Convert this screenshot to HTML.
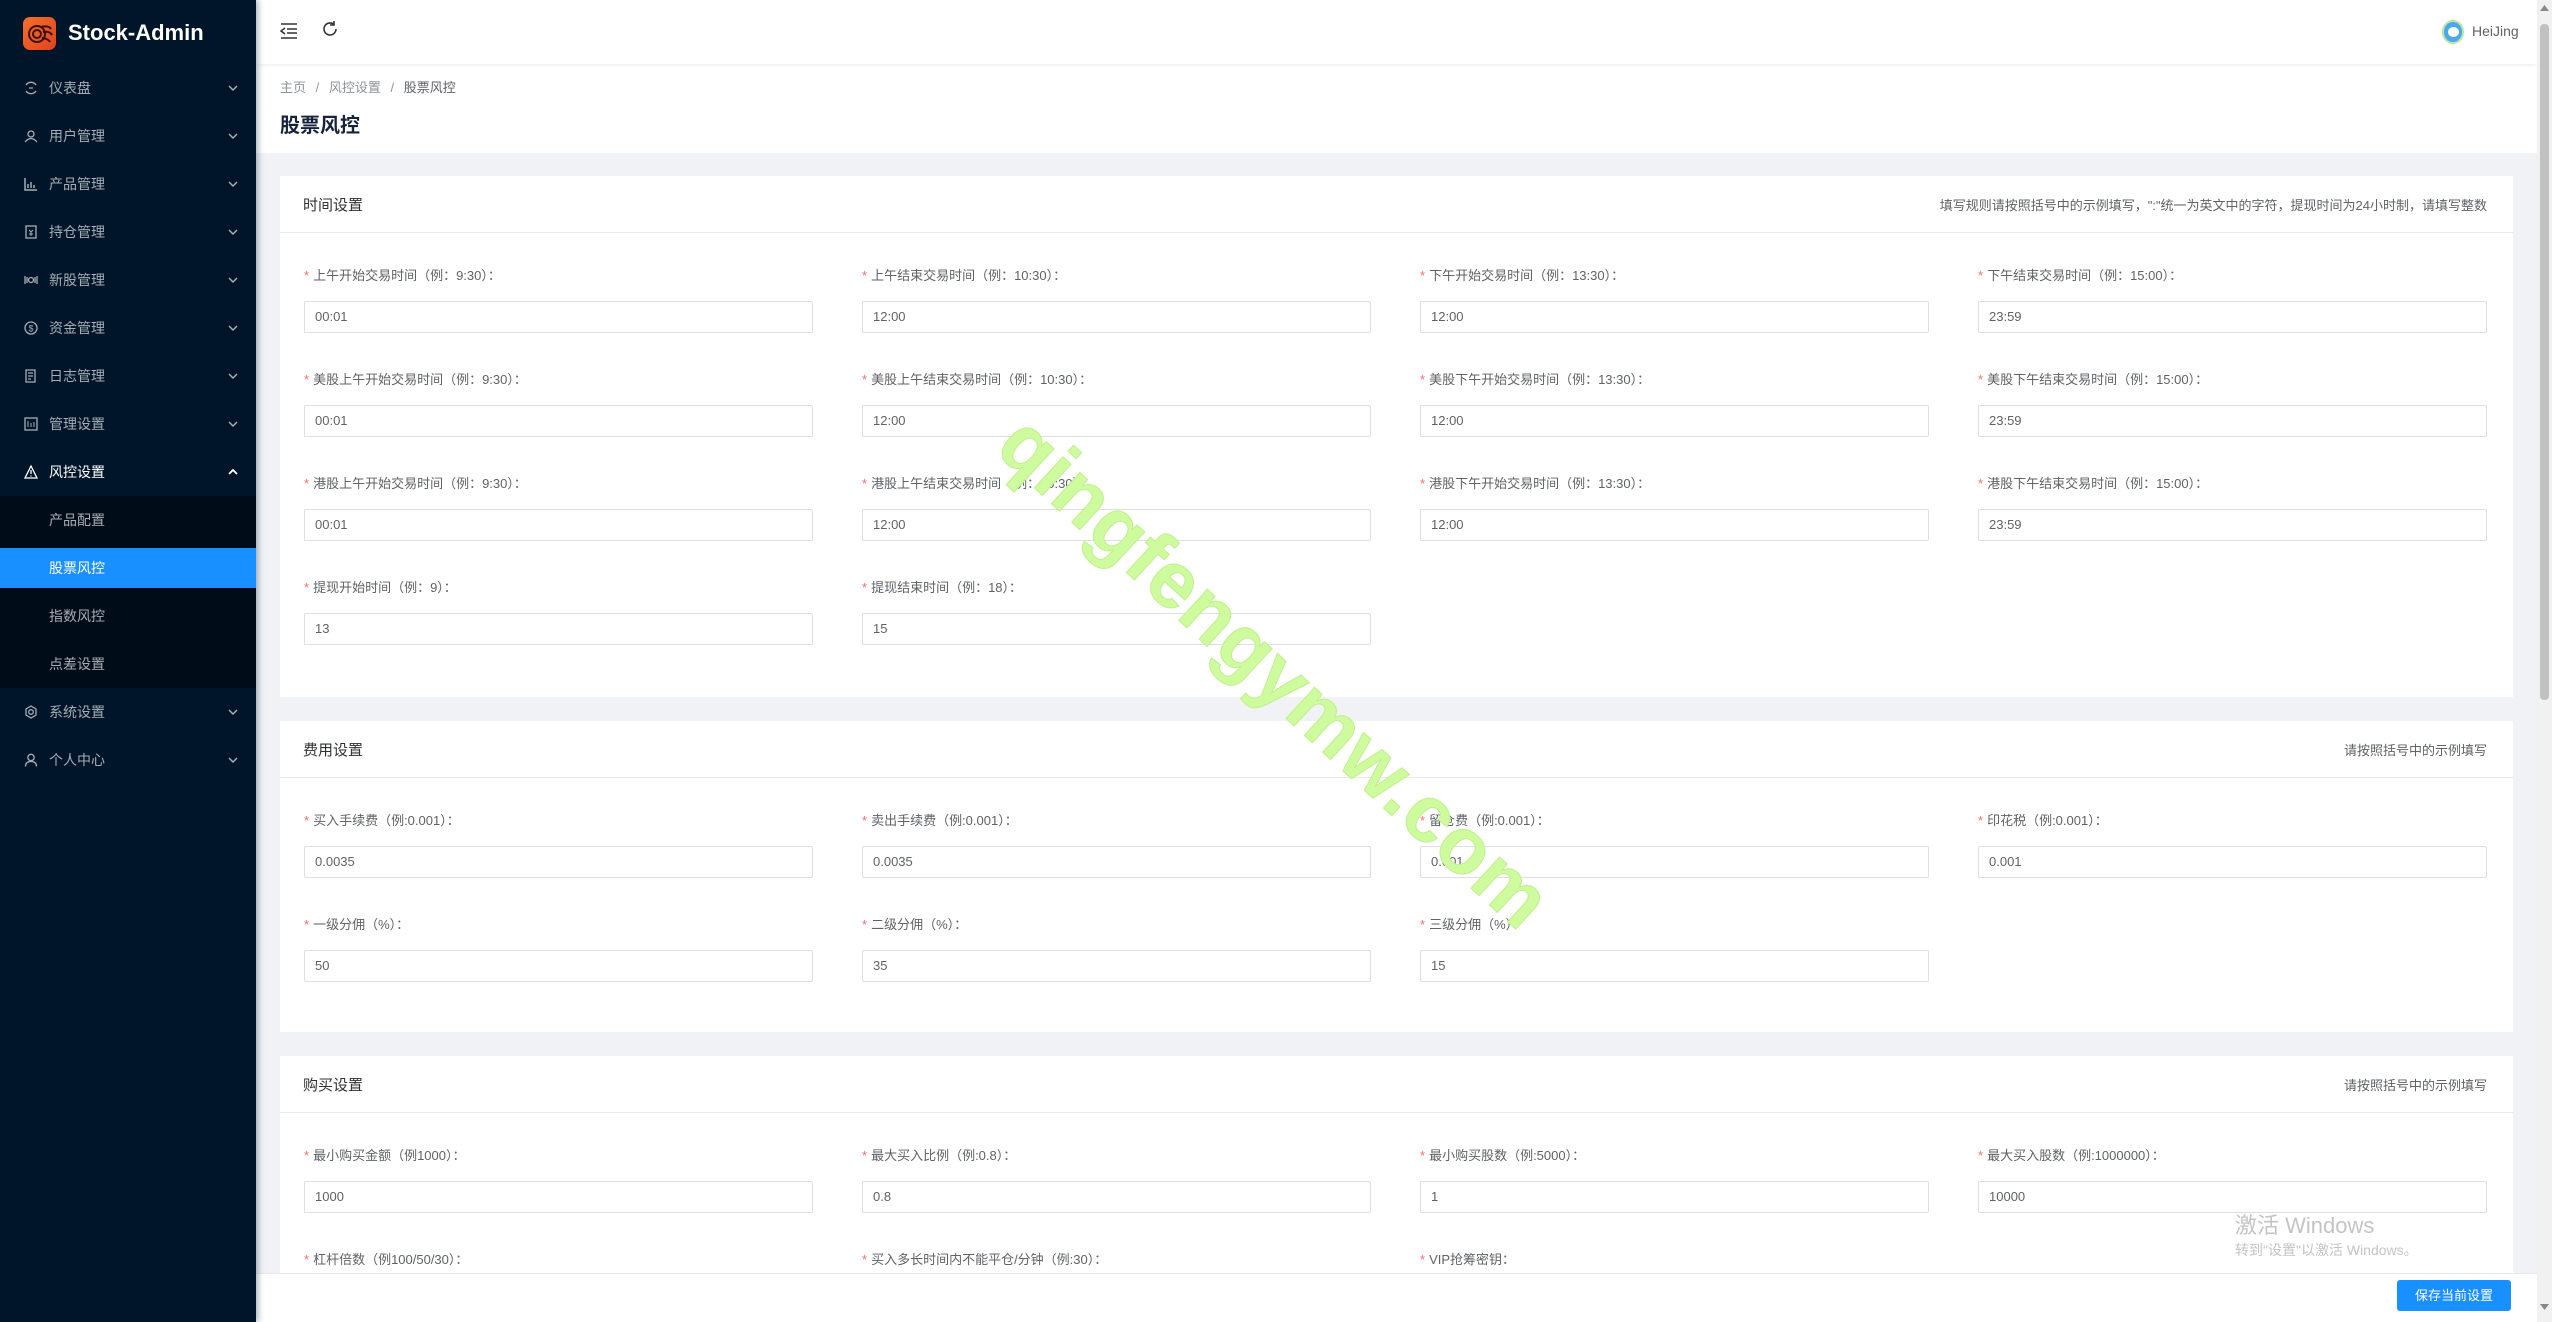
<!DOCTYPE html>
<html style="overflow:hidden;height:1322px"><head><meta charset="utf-8"><style>
*{margin:0;padding:0;box-sizing:border-box}
body{width:2552px;height:1322px;overflow:hidden;background:#f0f2f5;font-family:"Liberation Sans","Noto Sans CJK SC",sans-serif;position:relative}
.side{position:absolute;left:0;top:0;width:256px;height:1322px;background:#001529;box-shadow:2px 0 6px rgba(0,21,41,.35);z-index:5}
.logo{position:absolute;left:23px;top:17px;width:33px;height:33px;border-radius:7px;background:linear-gradient(135deg,#f4702e,#e2421c)}
.brand{position:absolute;left:68px;top:18px;color:#fff;font-weight:bold;font-size:22px;line-height:30px}
.mi{position:absolute;left:0;width:256px;height:48px;line-height:48px;color:#a6adb4;font-size:14px}
.mi .t{position:absolute;left:49px}
.mi svg.ic{position:absolute;left:24px;top:17px}
.mi svg.ar{position:absolute;left:228px;top:20px}
.sub{position:absolute;left:0;top:496px;width:256px;height:192px;background:#000c17}
.hdr{position:absolute;left:256px;top:0;width:2281px;height:64px;background:#fff;box-shadow:0 1px 4px rgba(0,21,41,.08);z-index:2}
.ph{position:absolute;left:256px;top:64px;width:2281px;height:89px;background:#fff}
.card{position:absolute;left:280px;width:2233px;background:#fff}
.ch{height:57px;border-bottom:1px solid #e8eaec;position:relative}
.ch .tt{position:absolute;left:23px;top:18px;font-size:15px;color:#303133}
.ch .hint{position:absolute;right:26px;top:19px;font-size:13px;color:#606266}
.f{position:absolute}
.f .l{position:absolute;left:0;top:-11px;white-space:nowrap;font-size:13px;color:#606266;line-height:20px}
.f .l b{color:#f56c6c;font-weight:normal;margin-right:4px}
.f .i{position:absolute;left:0;top:24px;width:509px;height:32px;border:1px solid #dcdfe6;border-radius:2px;padding-left:10px;line-height:30px;font-size:13px;color:#606266}
.bar{position:absolute;left:256px;top:1273px;width:2281px;height:49px;background:#fff;border-top:1px solid #e8eaec;z-index:3}
.btn{position:absolute;left:2141px;top:6px;width:114px;height:31px;background:#1890ff;border-radius:3px;color:#fff;font-size:13px;text-align:center;line-height:31px}
.sb{position:absolute;left:2537px;top:0;width:15px;height:1322px;background:#f1f1f1;z-index:6}
.wm{position:absolute;left:1275px;top:672px;transform:translate(-50%,-50%) rotate(42.5deg);font-size:80px;font-weight:bold;color:#cffb9f;-webkit-text-stroke:1px #c0f08c;white-space:nowrap;z-index:4;letter-spacing:1px}
</style></head><body>
<div class="side">
<div class="logo"><svg width="33" height="33" viewBox="0 0 33 33"><circle cx="14" cy="17" r="8" fill="none" stroke="#3a1208" stroke-width="2"/><circle cx="14" cy="17" r="4" fill="none" stroke="#3a1208" stroke-width="2"/><path d="M18 10 Q26 8 28 12 M20 15 Q27 14 29 18 M19 21 Q26 22 27 25" fill="none" stroke="#3a1208" stroke-width="2"/></svg></div>
<div class="brand">Stock-Admin</div>
<div class="mi" style="top:64px"><svg class="ic" width="14" height="14" viewBox="0 0 14 14"><path d="M2 4a6 6 0 0 1 10 0M2 10a6 6 0 0 0 10 0M5 7h4" fill="none" stroke="#a6adb4" stroke-width="1.3"/></svg><span class="t">仪表盘</span><svg class="ar" width="10" height="8"><path d="M1 2l4 4 4-4" fill="none" stroke="#a6adb4" stroke-width="1.5"/></svg></div>
<div class="mi" style="top:112px"><svg class="ic" width="14" height="14" viewBox="0 0 14 14"><circle cx="7" cy="5" r="3" fill="none" stroke="#a6adb4" stroke-width="1.3"/><path d="M1 13q6-7 12 0" fill="none" stroke="#a6adb4" stroke-width="1.3"/></svg><span class="t">用户管理</span><svg class="ar" width="10" height="8"><path d="M1 2l4 4 4-4" fill="none" stroke="#a6adb4" stroke-width="1.5"/></svg></div>
<div class="mi" style="top:160px"><svg class="ic" width="14" height="14" viewBox="0 0 14 14"><path d="M1 1v12h12M4 11V7M7 11V5M10 11V8" fill="none" stroke="#a6adb4" stroke-width="1.5"/></svg><span class="t">产品管理</span><svg class="ar" width="10" height="8"><path d="M1 2l4 4 4-4" fill="none" stroke="#a6adb4" stroke-width="1.5"/></svg></div>
<div class="mi" style="top:208px"><svg class="ic" width="14" height="14" viewBox="0 0 14 14"><rect x="2" y="1" width="10" height="12" fill="none" stroke="#a6adb4" stroke-width="1.3"/><path d="M5 5l2 2 2-2M7 7v4M5 9h4" fill="none" stroke="#a6adb4"/></svg><span class="t">持仓管理</span><svg class="ar" width="10" height="8"><path d="M1 2l4 4 4-4" fill="none" stroke="#a6adb4" stroke-width="1.5"/></svg></div>
<div class="mi" style="top:256px"><svg class="ic" width="14" height="14" viewBox="0 0 14 14"><path d="M1 3v8M3 4v6M11 4v6M13 3v8" stroke="#a6adb4" stroke-width="1.3"/><circle cx="7" cy="7" r="2.5" fill="none" stroke="#a6adb4" stroke-width="1.3"/></svg><span class="t">新股管理</span><svg class="ar" width="10" height="8"><path d="M1 2l4 4 4-4" fill="none" stroke="#a6adb4" stroke-width="1.5"/></svg></div>
<div class="mi" style="top:304px"><svg class="ic" width="14" height="14" viewBox="0 0 14 14"><circle cx="7" cy="7" r="6" fill="none" stroke="#a6adb4" stroke-width="1.3"/><text x="7" y="10.5" font-size="9" fill="#a6adb4" text-anchor="middle" font-family="Liberation Sans">$</text></svg><span class="t">资金管理</span><svg class="ar" width="10" height="8"><path d="M1 2l4 4 4-4" fill="none" stroke="#a6adb4" stroke-width="1.5"/></svg></div>
<div class="mi" style="top:352px"><svg class="ic" width="14" height="14" viewBox="0 0 14 14"><path d="M2 1h9v12H2zM4 4h5M4 7h5M4 10h3" fill="none" stroke="#a6adb4" stroke-width="1.3"/></svg><span class="t">日志管理</span><svg class="ar" width="10" height="8"><path d="M1 2l4 4 4-4" fill="none" stroke="#a6adb4" stroke-width="1.5"/></svg></div>
<div class="mi" style="top:400px"><svg class="ic" width="14" height="14" viewBox="0 0 14 14"><rect x="1" y="1" width="12" height="12" fill="none" stroke="#a6adb4" stroke-width="1.3"/><path d="M4 4v6M7 6v4M10 5v5" stroke="#a6adb4"/></svg><span class="t">管理设置</span><svg class="ar" width="10" height="8"><path d="M1 2l4 4 4-4" fill="none" stroke="#a6adb4" stroke-width="1.5"/></svg></div>
<div class="mi" style="top:448px;color:#fff"><svg class="ic" width="14" height="14" viewBox="0 0 14 14"><path d="M7 1L13 13H1z M7 5v4M7 10.5v1" fill="none" stroke="#fff" stroke-width="1.3"/></svg><span class="t">风控设置</span><svg class="ar" width="10" height="8"><path d="M1 6l4-4 4 4" fill="none" stroke="#fff" stroke-width="1.8"/></svg></div>
<div class="sub"></div>
<div class="mi" style="top:496px"><span class="t">产品配置</span></div>
<div class="mi" style="top:548px;height:40px;line-height:40px;background:#1890ff;color:#fff"><span class="t">股票风控</span></div>
<div class="mi" style="top:592px"><span class="t">指数风控</span></div>
<div class="mi" style="top:640px"><span class="t">点差设置</span></div>
<div class="mi" style="top:688px"><svg class="ic" width="14" height="14" viewBox="0 0 14 14"><circle cx="7" cy="7" r="2.3" fill="none" stroke="#a6adb4" stroke-width="1.3"/><path d="M7 1l5 3v6l-5 3-5-3V4z" fill="none" stroke="#a6adb4" stroke-width="1.3"/></svg><span class="t">系统设置</span><svg class="ar" width="10" height="8"><path d="M1 2l4 4 4-4" fill="none" stroke="#a6adb4" stroke-width="1.5"/></svg></div>
<div class="mi" style="top:736px"><svg class="ic" width="14" height="14" viewBox="0 0 14 14"><circle cx="7" cy="4.5" r="3.2" fill="none" stroke="#a6adb4" stroke-width="1.3"/><path d="M1.5 13.5q0-5 5.5-5t5.5 5" fill="none" stroke="#a6adb4" stroke-width="1.3"/></svg><span class="t">个人中心</span><svg class="ar" width="10" height="8"><path d="M1 2l4 4 4-4" fill="none" stroke="#a6adb4" stroke-width="1.5"/></svg></div>
</div>

<div class="hdr">
<svg style="position:absolute;left:24px;top:23px" width="18" height="16" viewBox="0 0 18 16"><path d="M1 1h16M7 6h10M7 10h10M1 15h16M5 5L1 8l4 3" fill="none" stroke="#333" stroke-width="1.5"/></svg>
<svg style="position:absolute;left:65px;top:20px" width="18" height="18" viewBox="0 0 18 18"><path d="M15 9A6 6 0 1 1 13 4.5M13 1v4h-4" fill="none" stroke="#333" stroke-width="1.6"/></svg>
<div style="position:absolute;left:2186px;top:20px;width:22px;height:24px;border-radius:50%;background:#4aa9ef;border:2px solid #b9e3a0"><div style="margin:5px auto;width:11px;height:10px;border-radius:50%;background:#fff"></div></div>
<div style="position:absolute;left:2216px;top:23px;font-size:14px;color:#606266">HeiJing</div>
</div>
<div class="ph">
<div style="position:absolute;left:24px;top:13px;font-size:13px;color:#909399">主页 <span style="margin:0 6px">/</span> 风控设置 <span style="margin:0 6px">/</span> <span style="color:#606266">股票风控</span></div>
<div style="position:absolute;left:24px;top:45px;font-size:20px;font-weight:bold;color:#17233d">股票风控</div>
</div>

<div class="card" style="top:176px;height:521px">
<div class="ch"><span class="tt">时间设置</span><span class="hint">填写规则请按照括号中的示例填写，":"统一为英文中的字符，提现时间为24小时制，请填写整数</span></div>
<div class="f" style="left:24px;top:101px"><div class="l"><b>*</b>上午开始交易时间（例：9:30）：</div><div class="i">00:01</div></div>
<div class="f" style="left:582px;top:101px"><div class="l"><b>*</b>上午结束交易时间（例：10:30）：</div><div class="i">12:00</div></div>
<div class="f" style="left:1140px;top:101px"><div class="l"><b>*</b>下午开始交易时间（例：13:30）：</div><div class="i">12:00</div></div>
<div class="f" style="left:1698px;top:101px"><div class="l"><b>*</b>下午结束交易时间（例：15:00）：</div><div class="i">23:59</div></div>
<div class="f" style="left:24px;top:205px"><div class="l"><b>*</b>美股上午开始交易时间（例：9:30）：</div><div class="i">00:01</div></div>
<div class="f" style="left:582px;top:205px"><div class="l"><b>*</b>美股上午结束交易时间（例：10:30）：</div><div class="i">12:00</div></div>
<div class="f" style="left:1140px;top:205px"><div class="l"><b>*</b>美股下午开始交易时间（例：13:30）：</div><div class="i">12:00</div></div>
<div class="f" style="left:1698px;top:205px"><div class="l"><b>*</b>美股下午结束交易时间（例：15:00）：</div><div class="i">23:59</div></div>
<div class="f" style="left:24px;top:309px"><div class="l"><b>*</b>港股上午开始交易时间（例：9:30）：</div><div class="i">00:01</div></div>
<div class="f" style="left:582px;top:309px"><div class="l"><b>*</b>港股上午结束交易时间（例：10:30）：</div><div class="i">12:00</div></div>
<div class="f" style="left:1140px;top:309px"><div class="l"><b>*</b>港股下午开始交易时间（例：13:30）：</div><div class="i">12:00</div></div>
<div class="f" style="left:1698px;top:309px"><div class="l"><b>*</b>港股下午结束交易时间（例：15:00）：</div><div class="i">23:59</div></div>
<div class="f" style="left:24px;top:413px"><div class="l"><b>*</b>提现开始时间（例：9）：</div><div class="i">13</div></div>
<div class="f" style="left:582px;top:413px"><div class="l"><b>*</b>提现结束时间（例：18）：</div><div class="i">15</div></div>
</div>

<div class="card" style="top:721px;height:311px">
<div class="ch"><span class="tt">费用设置</span><span class="hint">请按照括号中的示例填写</span></div>
<div class="f" style="left:24px;top:101px"><div class="l"><b>*</b>买入手续费（例:0.001）：</div><div class="i">0.0035</div></div>
<div class="f" style="left:582px;top:101px"><div class="l"><b>*</b>卖出手续费（例:0.001）：</div><div class="i">0.0035</div></div>
<div class="f" style="left:1140px;top:101px"><div class="l"><b>*</b>留仓费（例:0.001）：</div><div class="i">0.001</div></div>
<div class="f" style="left:1698px;top:101px"><div class="l"><b>*</b>印花税（例:0.001）：</div><div class="i">0.001</div></div>
<div class="f" style="left:24px;top:205px"><div class="l"><b>*</b>一级分佣（%）：</div><div class="i">50</div></div>
<div class="f" style="left:582px;top:205px"><div class="l"><b>*</b>二级分佣（%）：</div><div class="i">35</div></div>
<div class="f" style="left:1140px;top:205px"><div class="l"><b>*</b>三级分佣（%）：</div><div class="i">15</div></div>
</div>

<div class="card" style="top:1056px;height:266px;overflow:hidden">
<div class="ch"><span class="tt">购买设置</span><span class="hint">请按照括号中的示例填写</span></div>
<div class="f" style="left:24px;top:101px"><div class="l"><b>*</b>最小购买金额（例1000）：</div><div class="i">1000</div></div>
<div class="f" style="left:582px;top:101px"><div class="l"><b>*</b>最大买入比例（例:0.8）：</div><div class="i">0.8</div></div>
<div class="f" style="left:1140px;top:101px"><div class="l"><b>*</b>最小购买股数（例:5000）：</div><div class="i">1</div></div>
<div class="f" style="left:1698px;top:101px"><div class="l"><b>*</b>最大买入股数（例:1000000）：</div><div class="i">10000</div></div>
<div class="f" style="left:24px;top:205px"><div class="l"><b>*</b>杠杆倍数（例100/50/30）：</div><div class="i"></div></div>
<div class="f" style="left:582px;top:205px"><div class="l"><b>*</b>买入多长时间内不能平仓/分钟（例:30）：</div><div class="i"></div></div>
<div class="f" style="left:1140px;top:205px"><div class="l"><b>*</b>VIP抢筹密钥：</div><div class="i"></div></div>
</div>

<div style="position:absolute;left:2235px;top:1208px;font-size:22px;color:#c4c4c4;z-index:4">激活 Windows</div>
<div style="position:absolute;left:2235px;top:1240px;font-size:14px;color:#c4c4c4;z-index:4">转到"设置"以激活 Windows。</div>

<div class="bar"><div class="btn">保存当前设置</div></div>
<div class="sb"><div style="position:absolute;left:3px;top:24px;width:9px;height:676px;background:#c1c1c1;border-radius:4px"></div>
<svg style="position:absolute;left:3px;top:5px" width="9" height="6"><path d="M0 6L4.5 0 9 6z" fill="#888"/></svg>
<svg style="position:absolute;left:3px;top:1304px" width="9" height="6"><path d="M0 0L4.5 6 9 0z" fill="#888"/></svg></div>
<div class="wm">qingfengymw.com</div>
</body></html>
